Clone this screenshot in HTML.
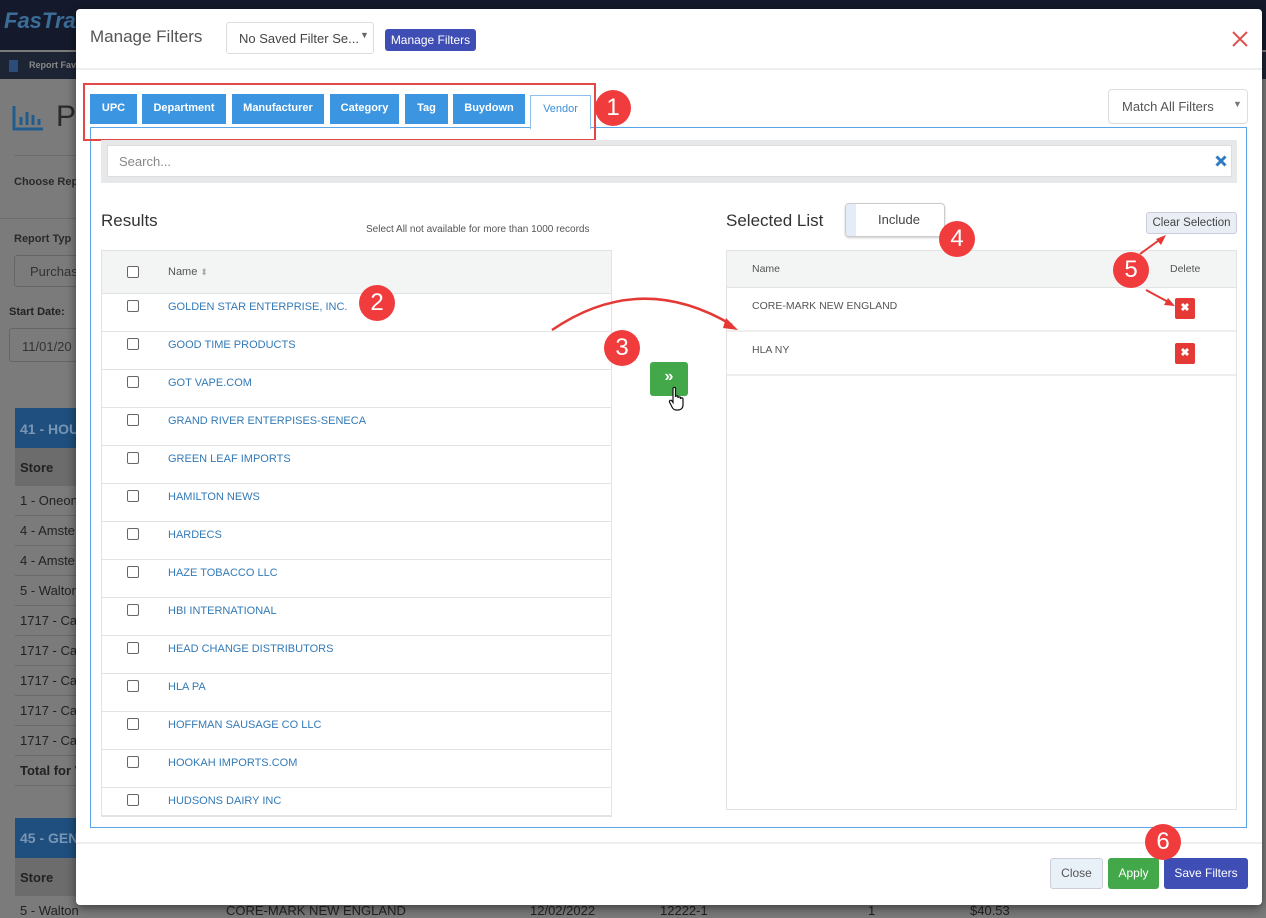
<!DOCTYPE html>
<html><head><meta charset="utf-8"><style>
*{box-sizing:border-box;margin:0;padding:0}
body{width:1266px;height:914px;overflow:hidden;position:relative;font-family:"Liberation Sans",sans-serif;background:#7b7b7b;}
.a{position:absolute}
.bg{color:#222;font-size:13px}
.tab{position:absolute;top:94px;height:30px;background:#3b95e0;color:#fff;font-size:11px;font-weight:bold;text-align:center;line-height:28px}
.row{position:absolute;left:102px;width:509px;height:38px;border-top:1px solid #e3e3e3;background:#fff}
.row .cb{position:absolute;left:25px;top:6px;width:12px;height:12px;border:1px solid #666;border-radius:2px}
.row span{position:absolute;left:66px;top:7px;font-size:11px;color:#337ab7}
.num{position:absolute;width:36px;height:36px;border-radius:50%;background:#f03c3c;color:#fff;font-size:24px;text-align:center;line-height:36px}
.del{position:absolute;left:1175px;width:20px;height:21px;background:#e53935;border-radius:2px;color:#fff;font-size:11px;font-weight:bold;text-align:center;line-height:21px}
.bgrow{position:absolute;left:15px;width:70px;height:30px;border-bottom:1px solid #6a6a6a;font-size:13px;color:#222;padding:7px 0 0 5px}
</style></head><body>
<div class="a" style="left:0;top:0;width:1266px;height:50px;background:#141a2b"></div>
<div class="a" style="left:4px;top:8px;color:#3b6d99;font-size:22px;font-style:italic;font-weight:bold">FasTrax</div>
<div class="a" style="left:0;top:52px;width:1266px;height:27px;background:#1d2433"></div>
<div class="a" style="left:9px;top:60px;width:9px;height:12px;background:#2c4d7a"></div>
<div class="a" style="left:29px;top:60px;font-size:9px;color:#888;font-weight:bold">Report Fav</div>
<svg class="a" style="left:12px;top:105px" width="32" height="26"><path d="M2 1V24H31" fill="none" stroke="#225c8c" stroke-width="3"/><path d="M9 12V20M15 7V20M21 10V20M27 14V20" stroke="#225c8c" stroke-width="3"/></svg>
<div class="a" style="left:56px;top:100px;font-size:30px;color:#2a2a2a">P</div>
<div class="a" style="left:14px;top:155px;width:70px;height:1px;background:#6c6c6c"></div>
<div class="a bg" style="left:14px;top:176px;font-size:11px;font-weight:bold;color:#2a2a2a">Choose Rep</div>
<div class="a" style="left:0;top:218px;width:80px;height:1px;background:#6c6c6c"></div>
<div class="a bg" style="left:14px;top:233px;font-size:11px;font-weight:bold;color:#2a2a2a">Report Typ</div>
<div class="a" style="left:14px;top:255px;width:70px;height:32px;border:1px solid #666;border-radius:3px"></div>
<div class="a bg" style="left:30px;top:264px;color:#333">Purchas</div>
<div class="a bg" style="left:9px;top:306px;font-size:11px;font-weight:bold">Start Date:</div>
<div class="a" style="left:9px;top:328px;width:70px;height:34px;border:1px solid #666;border-radius:3px"></div>
<div class="a bg" style="left:22px;top:339px;color:#333">11/01/20</div>
<div class="a" style="left:15px;top:408px;width:70px;height:40px;background:#1f4f7e"></div>
<div class="a" style="left:20px;top:421px;color:#7896b5;font-weight:bold;font-size:14px">41 - HOU</div>
<div class="a" style="left:15px;top:448px;width:70px;height:38px;background:#6c6c6c"></div>
<div class="a bg" style="left:20px;top:460px;font-weight:bold">Store</div>
<div class="bgrow" style="top:486px">1 - Oneon</div>
<div class="bgrow" style="top:516px">4 - Amste</div>
<div class="bgrow" style="top:546px">4 - Amste</div>
<div class="bgrow" style="top:576px">5 - Walton</div>
<div class="bgrow" style="top:606px">1717 - Ca</div>
<div class="bgrow" style="top:636px">1717 - Ca</div>
<div class="bgrow" style="top:666px">1717 - Ca</div>
<div class="bgrow" style="top:696px">1717 - Ca</div>
<div class="bgrow" style="top:726px">1717 - Ca</div>
<div class="bgrow" style="top:756px;font-weight:bold">Total for V</div>
<div class="a" style="left:15px;top:818px;width:70px;height:40px;background:#1f4f7e"></div>
<div class="a" style="left:20px;top:830px;color:#7896b5;font-weight:bold;font-size:14px">45 - GEN</div>
<div class="a" style="left:15px;top:858px;width:70px;height:38px;background:#6c6c6c"></div>
<div class="a bg" style="left:20px;top:870px;font-weight:bold">Store</div>
<div class="a bg" style="left:20px;top:903px">5 - Walton</div>
<div class="a bg" style="left:226px;top:903px">CORE-MARK NEW ENGLAND</div>
<div class="a bg" style="left:530px;top:903px">12/02/2022</div>
<div class="a bg" style="left:660px;top:903px">12222-1</div>
<div class="a bg" style="left:868px;top:903px">1</div>
<div class="a bg" style="left:970px;top:903px">$40.53</div>

<!-- modal -->
<div class="a" style="left:76px;top:9px;width:1186px;height:896px;background:#fff;border-radius:4px;box-shadow:0 3px 10px rgba(0,0,0,.5)"></div>
<div class="a" style="left:76px;top:68px;width:1186px;height:2px;background:#eee"></div>
<div class="a" style="left:90px;top:27px;font-size:17px;color:#555">Manage Filters</div>
<div class="a" style="left:226px;top:22px;width:148px;height:32px;border:1px solid #ddd;border-radius:3px;font-size:13px;color:#444;padding:8px 0 0 12px">No Saved Filter Se...</div>
<div class="a" style="left:360px;top:30px;font-size:9px;color:#666">▼</div>
<div class="a" style="left:385px;top:29px;width:91px;height:22px;background:#3f4eb5;border-radius:3px;color:#fff;font-size:12px;text-align:center;line-height:22px">Manage Filters</div>
<svg class="a" style="left:1231px;top:30px" width="18" height="18"><path d="M2 2L16 16M16 2L2 16" stroke="#e05252" stroke-width="2"/></svg>

<div class="tab" style="left:90px;width:47px">UPC</div>
<div class="tab" style="left:142px;width:84px">Department</div>
<div class="tab" style="left:232px;width:92px">Manufacturer</div>
<div class="tab" style="left:330px;width:69px">Category</div>
<div class="tab" style="left:405px;width:43px">Tag</div>
<div class="tab" style="left:453px;width:72px">Buydown</div>
<div class="a" style="left:90px;top:127px;width:1157px;height:701px;border:1px solid #5aa5e8"></div>
<div class="a" style="left:530px;top:95px;width:61px;height:34px;background:#fff;border:1px solid #8fc0ec;border-bottom:none;color:#3b8fd9;font-size:11px;text-align:center;line-height:26px">Vendor</div>
<div class="a" style="left:83px;top:83px;width:513px;height:58px;border:2px solid #e34848"></div>
<div class="a" style="left:1108px;top:89px;width:140px;height:35px;border:1px solid #ddd;border-radius:4px;font-size:13px;color:#555;padding:9px 0 0 13px">Match All Filters</div>
<div class="a" style="left:1233px;top:99px;font-size:9px;color:#777">▼</div>

<div class="a" style="left:101px;top:140px;width:1136px;height:43px;background:#e6e8ea"></div>
<div class="a" style="left:107px;top:145px;width:1125px;height:32px;background:#fff;border:1px solid #ddd;font-size:13px;color:#888;padding:8px 0 0 11px">Search...</div>
<svg class="a" style="left:1215px;top:155px" width="12" height="12"><path d="M1.5 1.5L10.5 10.5M10.5 1.5L1.5 10.5" stroke="#2f7bc0" stroke-width="3"/></svg>

<div class="a" style="left:101px;top:211px;font-size:17px;color:#333">Results</div>
<div class="a" style="left:366px;top:224px;font-size:10px;color:#555">Select All not available for more than 1000 records</div>
<div class="a" style="left:101px;top:250px;width:511px;height:567px;border:1px solid #e3e3e3;overflow:hidden;background:#fff">
</div>
<div class="a" style="left:102px;top:251px;width:509px;height:42px;background:#f3f4f4"></div>
<div class="a" style="left:127px;top:266px;width:12px;height:12px;border:1px solid #666;border-radius:2px;background:#fff"></div>
<div class="a" style="left:168px;top:266px;font-size:11px;color:#555">Name <span style="color:#aaa;font-size:9px">⬍</span></div>
<div class="row" style="top:293px"><div class="cb"></div><span>GOLDEN STAR ENTERPRISE, INC.</span></div>
<div class="row" style="top:331px"><div class="cb"></div><span>GOOD TIME PRODUCTS</span></div>
<div class="row" style="top:369px"><div class="cb"></div><span>GOT VAPE.COM</span></div>
<div class="row" style="top:407px"><div class="cb"></div><span>GRAND RIVER ENTERPISES-SENECA</span></div>
<div class="row" style="top:445px"><div class="cb"></div><span>GREEN LEAF IMPORTS</span></div>
<div class="row" style="top:483px"><div class="cb"></div><span>HAMILTON NEWS</span></div>
<div class="row" style="top:521px"><div class="cb"></div><span>HARDECS</span></div>
<div class="row" style="top:559px"><div class="cb"></div><span>HAZE TOBACCO LLC</span></div>
<div class="row" style="top:597px"><div class="cb"></div><span>HBI INTERNATIONAL</span></div>
<div class="row" style="top:635px"><div class="cb"></div><span>HEAD CHANGE DISTRIBUTORS</span></div>
<div class="row" style="top:673px"><div class="cb"></div><span>HLA PA</span></div>
<div class="row" style="top:711px"><div class="cb"></div><span>HOFFMAN SAUSAGE CO LLC</span></div>
<div class="row" style="top:749px"><div class="cb"></div><span>HOOKAH IMPORTS.COM</span></div>
<div class="row" style="top:787px;height:29px;border-bottom:1px solid #e3e3e3"><div class="cb"></div><span>HUDSONS DAIRY INC</span></div>

<div class="a" style="left:650px;top:362px;width:38px;height:34px;background:#43a849;border-radius:3px;color:#fff;font-size:16px;font-weight:bold;text-align:center;line-height:30px">»</div>
<svg class="a" style="left:668px;top:386px" width="18" height="26"><path d="M5 2.5C5 1 7.5 1 7.5 2.5V11C7.5 9.5 10 9.5 10 11V12C10 10.5 12.5 10.5 12.5 12V13C12.5 11.5 15 11.5 15 13V19C15 22 13 24 10 24H8C6 24 5 23 4 21L1.5 16C1 14.5 3 13.5 4 15L5 16.5Z" fill="#fff" stroke="#111" stroke-width="1.2"/></svg>

<div class="a" style="left:726px;top:211px;font-size:17px;color:#333">Selected List</div>
<div class="a" style="left:845px;top:203px;width:100px;height:34px;border:1px solid #ccc;border-radius:4px;box-shadow:0 1px 2px rgba(0,0,0,.2);background:#fff"></div>
<div class="a" style="left:846px;top:204px;width:10px;height:32px;background:#e4edf7;border-radius:3px 0 0 3px"></div>
<div class="a" style="left:878px;top:212px;font-size:13px;color:#444">Include</div>
<div class="a" style="left:1146px;top:212px;width:91px;height:22px;background:#e9eef4;border:1px solid #ccd;border-radius:3px;font-size:11.5px;color:#444;text-align:center;line-height:20px">Clear Selection</div>
<div class="a" style="left:726px;top:250px;width:511px;height:560px;border:1px solid #e3e3e3"></div>
<div class="a" style="left:727px;top:251px;width:509px;height:37px;background:#f3f4f4;border-bottom:1px solid #e3e3e3"></div>
<div class="a" style="left:752px;top:263px;font-size:10.5px;color:#555">Name</div>
<div class="a" style="left:1170px;top:263px;font-size:10.5px;color:#555">Delete</div>
<div class="a" style="left:752px;top:300px;font-size:10.5px;color:#555">CORE-MARK NEW ENGLAND</div>
<div class="a" style="left:727px;top:330px;width:509px;height:2px;background:#eee"></div>
<div class="a" style="left:752px;top:344px;font-size:10.5px;color:#555">HLA NY</div>
<div class="a" style="left:727px;top:374px;width:509px;height:2px;background:#eee"></div>
<div class="del" style="top:298px">✖</div>
<div class="del" style="top:343px">✖</div>

<div class="a" style="left:76px;top:842px;width:1186px;height:2px;background:#eee"></div>
<div class="a" style="left:1050px;top:858px;width:53px;height:31px;background:#e8f0f8;border:1px solid #ccd;border-radius:3px;font-size:12px;color:#555;text-align:center;line-height:29px">Close</div>
<div class="a" style="left:1108px;top:858px;width:51px;height:31px;background:#43a849;border-radius:3px;font-size:12px;color:#fff;text-align:center;line-height:31px">Apply</div>
<div class="a" style="left:1164px;top:858px;width:84px;height:31px;background:#3f4eb5;border-radius:3px;font-size:12px;color:#fff;text-align:center;line-height:31px">Save Filters</div>

<svg class="a" style="left:0;top:0" width="1266" height="914">
<path d="M552 330 Q640 270 732 325" fill="none" stroke="#e53935" stroke-width="2.5"/>
<path d="M738 330 L726 318 L723 328 Z" fill="#e53935"/>
<path d="M1146 290 L1172 304" stroke="#e53935" stroke-width="2"/><path d="M1175 306 L1164 305 L1168 298Z" fill="#e53935"/>
<path d="M1140 254 L1162 238" stroke="#e53935" stroke-width="2"/><path d="M1166 235 L1161 245 L1156 239Z" fill="#e53935"/>
</svg>
<div class="num" style="left:595px;top:90px">1</div>
<div class="num" style="left:359px;top:285px">2</div>
<div class="num" style="left:604px;top:330px">3</div>
<div class="num" style="left:939px;top:221px">4</div>
<div class="num" style="left:1113px;top:252px">5</div>
<div class="num" style="left:1145px;top:824px">6</div>
</body></html>
